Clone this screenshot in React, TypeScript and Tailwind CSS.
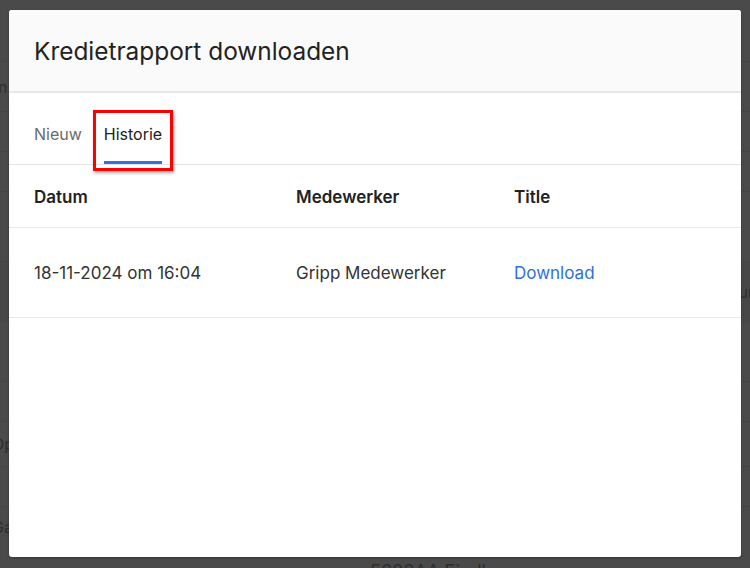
import React from "react";

export default function App() {
  const font = { fontFamily: "Inter, 'Noto Sans', Arial, sans-serif" };
  return (
    <div className="relative w-[750px] h-[568px] overflow-hidden bg-[#4a4a4a]" style={font}>
      {/* background page (dimmed) */}
      <div className="flex flex-col text-[16px] text-[#2e2e2e]">
        <div className="h-[62px] border-b border-[#444]" />
        <div className="h-[50px] border-b border-[#444] flex items-center">
          <span className="-ml-[6px]">in</span>
        </div>
        <div className="h-[40px] border-b border-[#444]" />
        <div className="h-[40px] border-b border-[#444]" />
        <div className="h-[70px] border-b border-[#444]" />
        <div className="h-[60px] bg-[#474747] flex items-center justify-end">
          <span className="mr-[-4px]">ur</span>
        </div>
        <div className="h-[60px] border-b border-[#444]" />
        <div className="h-[40px] border-b border-[#444]" />
        <div className="h-[45px] border-b border-[#444] flex items-center">
          <span className="-ml-[8px]">Op</span>
        </div>
        <div className="h-[40px] border-b border-[#444]" />
        <div className="h-[40px] flex items-center">
          <span className="-ml-[8px]">Gar</span>
        </div>
        <div className="h-[30px] flex items-end pl-[370px]">
          <span className="text-[18px] leading-none translate-y-[4px]">5602AA Eindhoven</span>
        </div>
      </div>

      {/* modal */}
      <div className="absolute left-[9px] top-[10px] w-[732px] h-[547px] bg-white rounded-[3px] overflow-hidden flex flex-col shadow-[0_1px_3px_rgba(0,0,0,0.3)]">
        <div className="h-[83px] shrink-0 bg-[#fafafa] border-b-2 border-[#e8e8e8] flex items-center px-[25px] pt-[2px]">
          <h1 className="text-[24.4px] text-[#222] font-normal leading-none">Kredietrapport downloaden</h1>
        </div>
        <div className="h-[72px] shrink-0 border-b border-[#e4e4e4] flex px-[25px] gap-[22px]">
          <div className="h-full flex items-start pt-[31px] text-[16px] leading-[20px] text-[#6b6b6b]">Nieuw</div>
          <div className="relative h-full flex items-start pt-[31px] text-[16px] leading-[20px] text-[#222]">
            Historie
            <div className="absolute left-0 right-0 bottom-0 h-[3px] bg-[#3b6fd8]" />
            <div className="absolute -left-[11px] -right-[11px] top-[17px] -bottom-[7px] border-[3px] border-[#ff0000] shadow-[1px_2px_3px_rgba(0,0,0,0.35)]" />
          </div>
        </div>
        <div className="h-[63px] shrink-0 border-b border-[#e8e8e8] grid grid-cols-[262px_218px_1fr] items-center pl-[25px] pt-[3px] text-[17px] font-semibold text-[#222]">
          <div>Datum</div>
          <div>Medewerker</div>
          <div>Title</div>
        </div>
        <div className="h-[90px] shrink-0 border-b border-[#e8e8e8] grid grid-cols-[262px_218px_1fr] items-center pl-[25px] pt-[2px] text-[17px] text-[#333]">
          <div>18-11-2024 om 16:04</div>
          <div>Gripp Medewerker</div>
          <div className="text-[#2f6fdc]">Download</div>
        </div>
      </div>
    </div>
  );
}
